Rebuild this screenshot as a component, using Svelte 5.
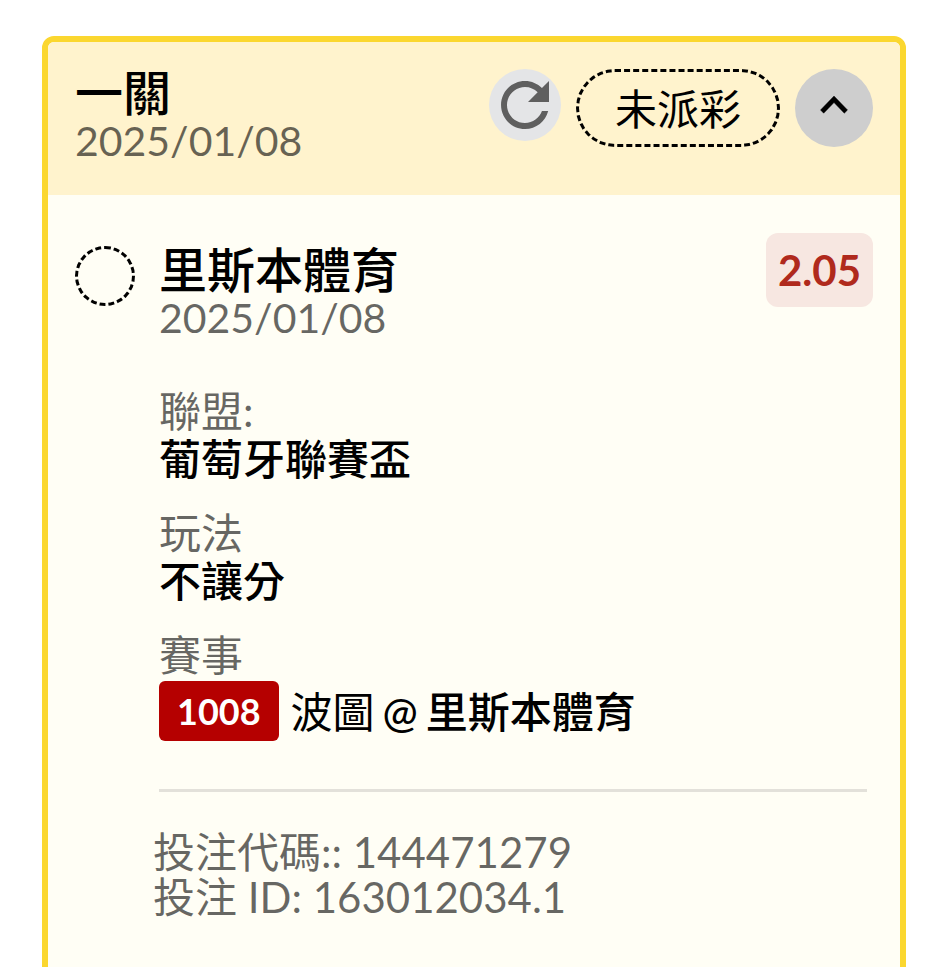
<script>
    let expanded = true;

    const bet = {
        title: "一關",
        date: "2025/01/08",
        status: "未派彩",
        code: "144471279",
        id: "163012034.1",
    };

    const leg = {
        pick: "里斯本體育",
        date: "2025/01/08",
        odds: "2.05",
        number: "1008",
        away: "波圖",
        home: "里斯本體育",
    };

    const fields = [
        { label: "聯盟:", value: "葡萄牙聯賽盃" },
        { label: "玩法", value: "不讓分" },
    ];

    function toggle() {
        expanded = !expanded;
    }
</script>

<article class="bet-card">
    <header class="bet-header">
        <div class="heading">
            <h2 class="title">{bet.title}</h2>
            <div class="date">{bet.date}</div>
        </div>
        <div class="actions">
            <button class="refresh-btn" aria-label="Refresh">
                <svg viewBox="0 0 24 24" aria-hidden="true">
                    <path
                        fill="currentColor"
                        d="M17.65 6.35C16.2 4.9 14.21 4 12 4c-4.42 0-7.99 3.58-7.99 8s3.57 8 7.99 8c3.73 0 6.84-2.55 7.73-6h-2.08c-.82 2.33-3.04 4-5.65 4-3.31 0-6-2.69-6-6s2.69-6 6-6c1.66 0 3.14.69 4.22 1.78L13 11h7V4l-2.35 2.35z"
                    />
                </svg>
            </button>
            <span class="status">{bet.status}</span>
            <button
                class="toggle-btn"
                class:collapsed={!expanded}
                aria-label="Toggle details"
                aria-expanded={expanded}
                on:click={toggle}
            >
                <svg viewBox="0 0 24 24" aria-hidden="true">
                    <path
                        fill="currentColor"
                        stroke="currentColor"
                        stroke-width="0.2"
                        d="M12 6.7l-6 6.200 1.410 1.410L12 9.600l4.590 4.710L18 12.900z"
                    />
                </svg>
            </button>
        </div>
    </header>

    {#if expanded}
        <section class="bet-body">
            <span class="ring"></span>
            <div class="details">
                <div class="leg-header">
                    <div class="heading">
                        <h3 class="title">{leg.pick}</h3>
                        <div class="date">{leg.date}</div>
                    </div>
                    <strong class="odds">{leg.odds}</strong>
                </div>

                <dl class="fields">
                    {#each fields as field}
                        <div>
                            <dt>{field.label}</dt>
                            <dd>{field.value}</dd>
                        </div>
                    {/each}
                    <div>
                        <dt>賽事</dt>
                        <dd class="match">
                            <span class="number">{leg.number}</span>
                            <span class="teams">
                                <span class="away">{leg.away}</span>
                                <span>@</span>
                                <span>{leg.home}</span>
                            </span>
                        </dd>
                    </div>
                </dl>

                <footer class="codes">
                    <div>投注代碼:: {bet.code}</div>
                    <div>投注 ID: {bet.id}</div>
                </footer>
            </div>
        </section>
    {/if}
</article>

<style>
    :global(body) {
        background: #fff;
        overflow-x: hidden;
    }

    .bet-card {
        margin: 36px 28px 0 42px;
        border: 6px solid #fbd72f;
        border-radius: 12px;
        overflow: hidden;
        background: #fffef5;
        color: #000;
        font-family: Lato, "Noto Sans CJK TC", sans-serif;
        font-size: 42px;
        line-height: 48px;
    }

    .bet-header {
        display: flex;
        justify-content: space-between;
        align-items: flex-start;
        padding: 27px 27px 30px;
        background: #fff3cd;
    }

    .title {
        margin: 0;
        font-size: 48px;
        font-weight: 500;
        line-height: 48px;
    }

    .date {
        color: rgba(0, 0, 0, 0.6);
        font-size: 41px;
    }

    .actions {
        display: flex;
        align-items: flex-start;
        gap: 15px;
    }

    button {
        display: flex;
        align-items: center;
        justify-content: center;
        padding: 0;
        border: none;
        border-radius: 50%;
        cursor: pointer;
    }

    .refresh-btn {
        width: 72px;
        height: 72px;
        background: #e4e5e7;
        color: #5f5f5f;
    }

    .refresh-btn svg {
        width: 72px;
        height: 72px;
    }

    .toggle-btn {
        width: 78px;
        height: 78px;
        background: #cecece;
        color: #000;
    }

    .toggle-btn svg {
        width: 54px;
        height: 54px;
    }

    .collapsed svg {
        transform: rotate(180deg);
    }

    .status {
        padding: 13px 36px 11px;
        border: 3px dashed #000;
        border-radius: 39px;
    }

    .bet-body {
        display: flex;
        gap: 24px;
        padding: 38px 27px 72px;
    }

    .ring {
        flex: none;
        box-sizing: border-box;
        width: 60px;
        height: 60px;
        margin-top: 13px;
        border: 3px dashed #000;
        border-radius: 50%;
    }

    .details {
        flex: 1;
    }

    .leg-header {
        display: flex;
        justify-content: space-between;
        align-items: flex-start;
    }

    .leg-header .heading {
        padding-top: 13px;
    }

    .odds {
        padding: 13px 12px;
        border-radius: 12px;
        background: #f7e7e1;
        color: #b02a1d;
    }

    .fields {
        display: flex;
        flex-direction: column;
        gap: 26px;
        margin: 45px 6px 0 0;
        padding-bottom: 48px;
        border-bottom: 3px solid #e3e1da;
    }

    dt {
        color: rgba(0, 0, 0, 0.6);
    }

    dd {
        margin: 0;
        font-weight: 500;
    }

    .match {
        display: flex;
        align-items: center;
        gap: 12px;
        margin-top: 2px;
    }

    .number {
        padding: 6px 18px;
        border-radius: 6px;
        background: #b50000;
        color: #fff;
        font-size: 36px;
        font-weight: 700;
    }

    .teams {
        display: flex;
        gap: 8px;
        padding-top: 2px;
    }

    .away {
        font-weight: 400;
    }

    .codes {
        margin: 38px 0 0 -6px;
        color: rgba(0, 0, 0, 0.6);
        line-height: 45px;
    }
</style>
